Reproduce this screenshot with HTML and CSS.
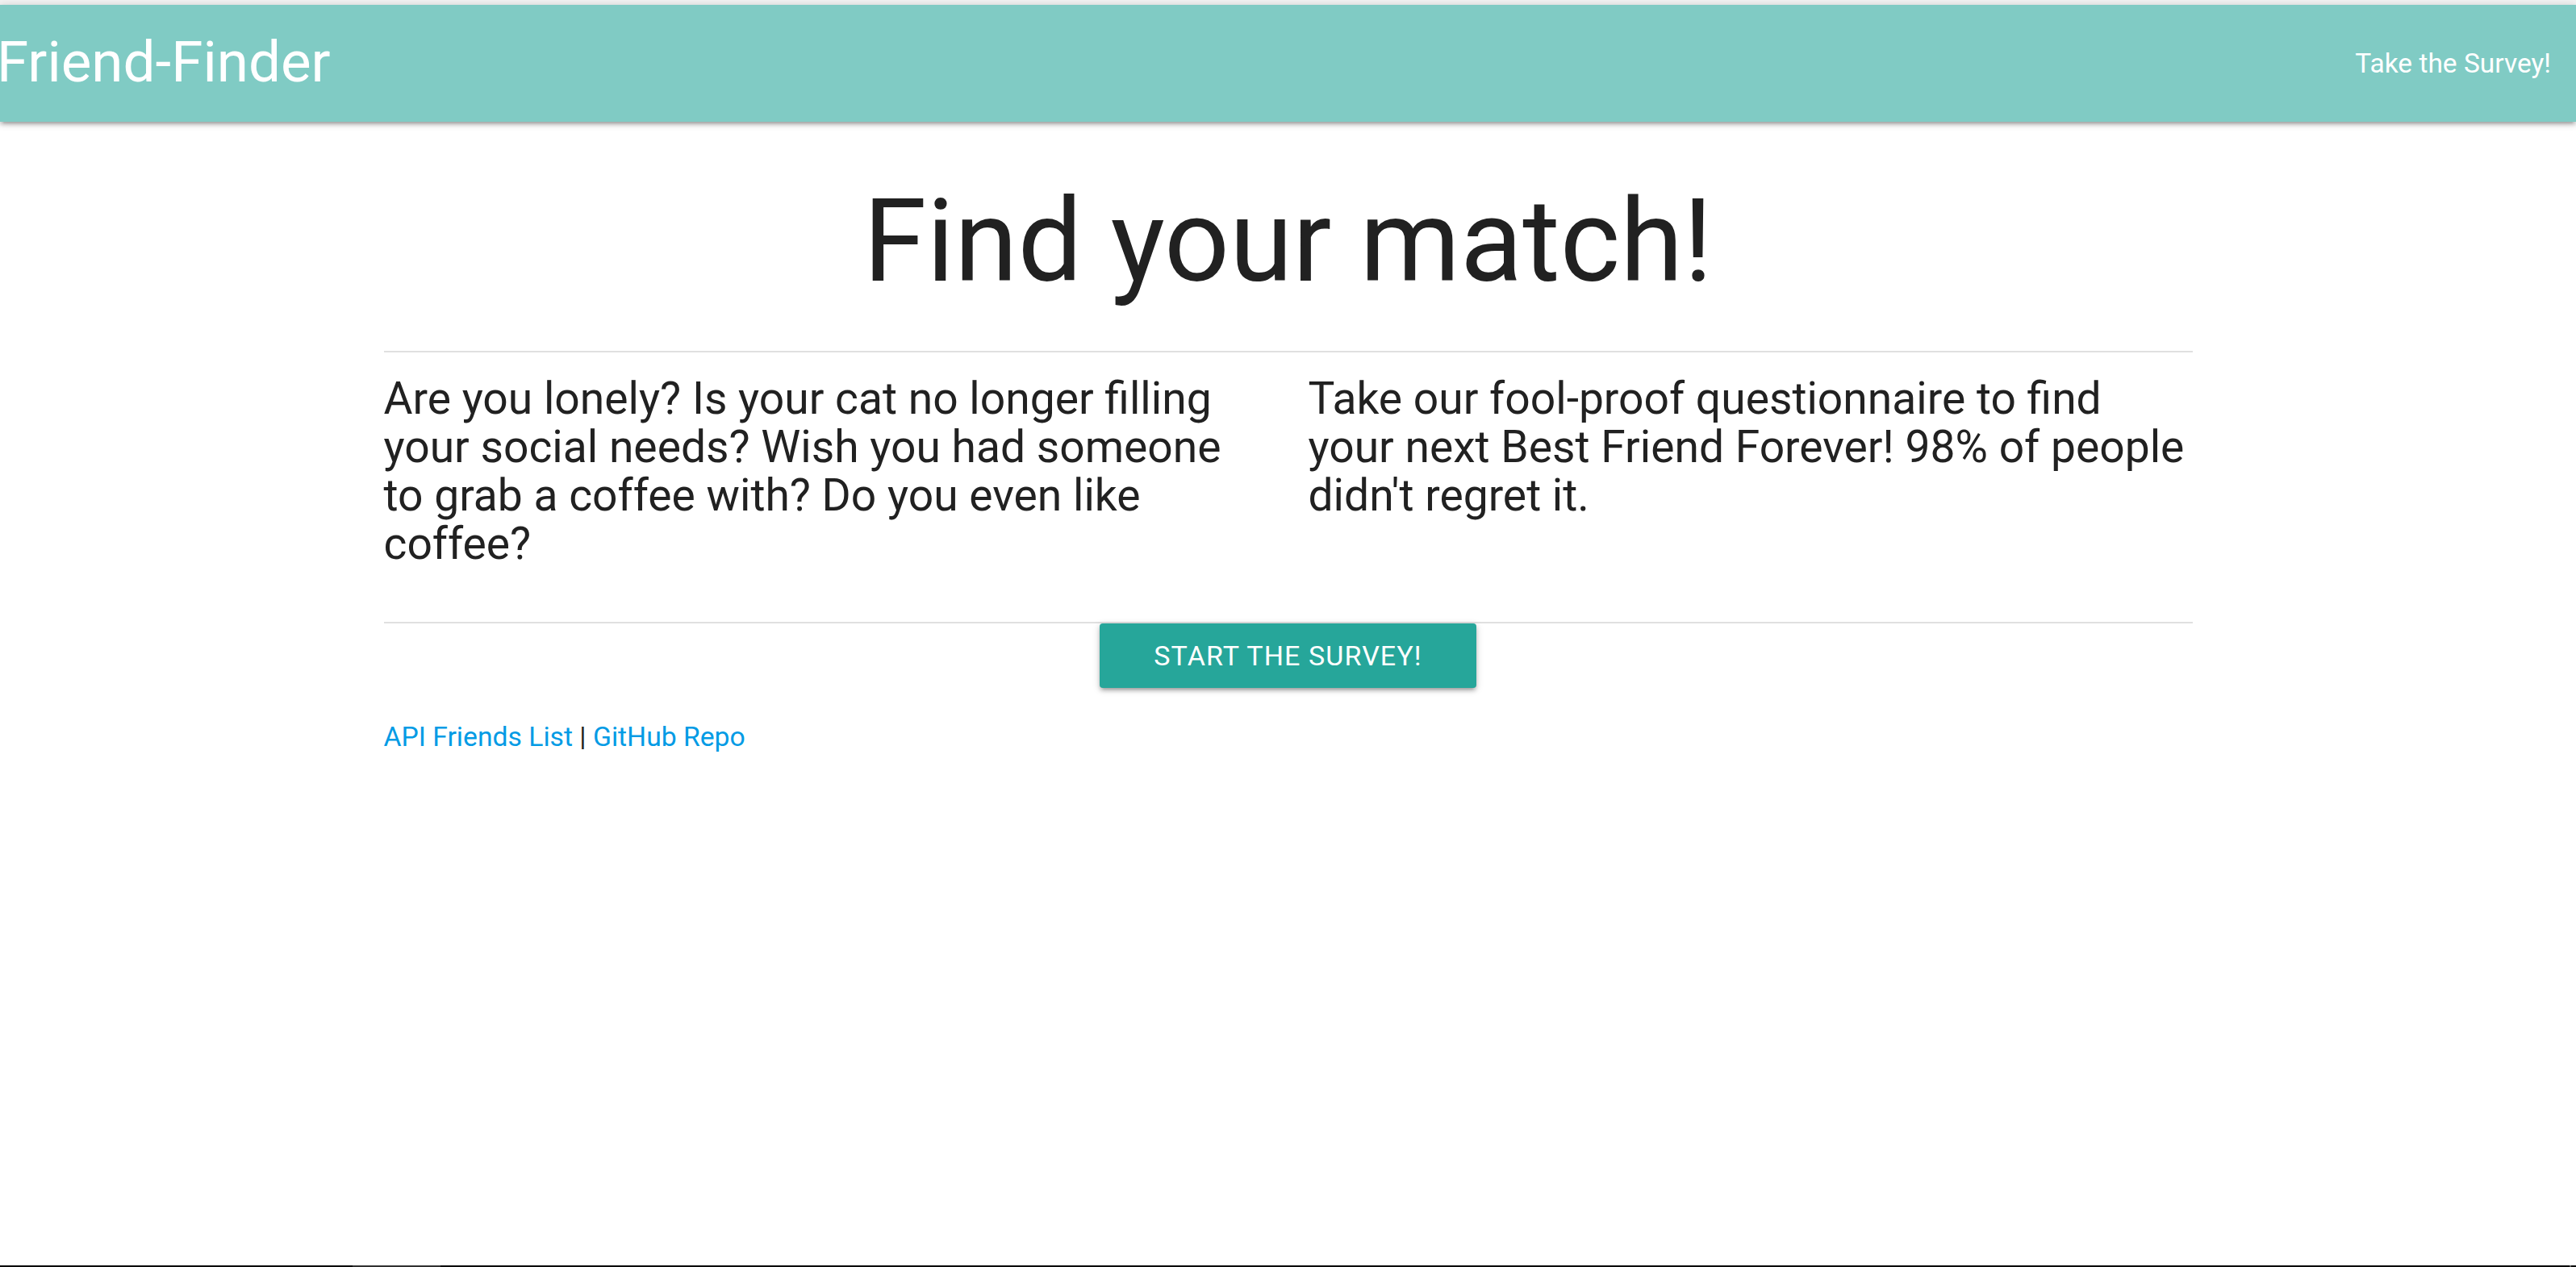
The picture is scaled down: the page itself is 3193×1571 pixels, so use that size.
FILE: index.html
```html
<!DOCTYPE html>
<html lang="en">
<head>
<meta charset="utf-8">
<title>Friend-Finder</title>
<link rel="stylesheet" href="styles.css">
</head>
<body>
<div class="page">
  <div class="topstrip"></div>
  <nav class="navbar">
    <a class="brand" href="#">Friend-Finder</a>
    <a class="navlink" href="#">Take the Survey!</a>
  </nav>
  <main class="container">
    <h1 class="title">Find your match!</h1>
    <div class="divider"></div>
    <div class="cols">
      <h5 class="blurb">Are you lonely? Is your cat no longer filling your social needs? Wish you had someone to grab a coffee with? Do you even like coffee?</h5>
      <h5 class="blurb">Take our fool-proof questionnaire to find your next Best Friend Forever! 98% of people didn't regret it.</h5>
    </div>
    <div class="divider"></div>
    <div class="btnrow"><a class="btn" href="#">Start the Survey!</a></div>
    <p class="links"><a href="#">API Friends List</a> | <a href="#">GitHub Repo</a></p>
  </main>
  <div class="bottombar"><span class="seg"></span><span class="tick"></span></div>
</div>
</body>
</html>
```

FILE: styles.css
```css
html, body {
  margin: 0;
  padding: 0;
  background: #ffffff;
}
body {
  font-family: Roboto, "Noto Sans", "Liberation Sans", sans-serif;
  color: rgba(0, 0, 0, 0.87);
}
.page {
  display: flex;
  flex-direction: column;
  min-height: 100vh;
}
.topstrip {
  height: 6px;
  background: #f2f2f2;
}
.navbar {
  height: 145px;
  background: #80cbc4;
  display: flex;
  align-items: center;
  justify-content: space-between;
  box-shadow: 0 4px 4px 0 rgba(0,0,0,0.14), 0 6px 2px -4px rgba(0,0,0,0.12), 0 2px 10px 0 rgba(0,0,0,0.2);
  position: relative;
  z-index: 1;
}
.brand {
  color: #ffffff;
  text-decoration: none;
  font-size: 71px;
  line-height: 145px;
  font-weight: 400;
  margin-left: -4px;
  padding-bottom: 4px;
}
.navlink {
  color: #ffffff;
  text-decoration: none;
  font-size: 33.5px;
  line-height: 145px;
  padding: 0 31px;
}
.container {
  width: 2242px;
  margin: 0 auto;
  flex: 1;
}
.title {
  margin: 71px 0 57px;
  font-size: 142px;
  line-height: 156px;
  font-weight: 400;
  text-align: center;
  color: #212121;
}
.divider {
  height: 2px;
  background: #e0e0e0;
}
.cols {
  display: grid;
  grid-template-columns: 1fr 1fr;
  column-gap: 50px;
  margin: 27px 0 67px;
}
.blurb {
  margin: 0;
  font-size: 55.2px;
  line-height: 60px;
  font-weight: 400;
  color: #212121;
}
.btnrow {
  display: flex;
  justify-content: center;
}
.btn {
  display: inline-block;
  height: 80px;
  line-height: 80px;
  padding: 0 67px;
  font-size: 34px;
  letter-spacing: 1.1px;
  text-transform: uppercase;
  background: #26a69a;
  color: #ffffff;
  text-decoration: none;
  border-radius: 4px;
  box-shadow: 0 4px 4px 0 rgba(0,0,0,0.14), 0 6px 2px -4px rgba(0,0,0,0.12), 0 2px 10px 0 rgba(0,0,0,0.2);
}
.links {
  margin: 35px 0 0;
  font-size: 33.7px;
  line-height: 51px;
  color: #212121;
}
.links a {
  color: #039be5;
  text-decoration: none;
}
.bottombar {
  height: 2px;
  background: #000000;
  display: flex;
  position: relative;
}
.seg {
  width: 109px;
  margin-left: 437px;
  background: #303030;
}
.tick {
  margin-left: auto;
  width: 2px;
  margin-right: 6px;
  background: #555555;
}
```
